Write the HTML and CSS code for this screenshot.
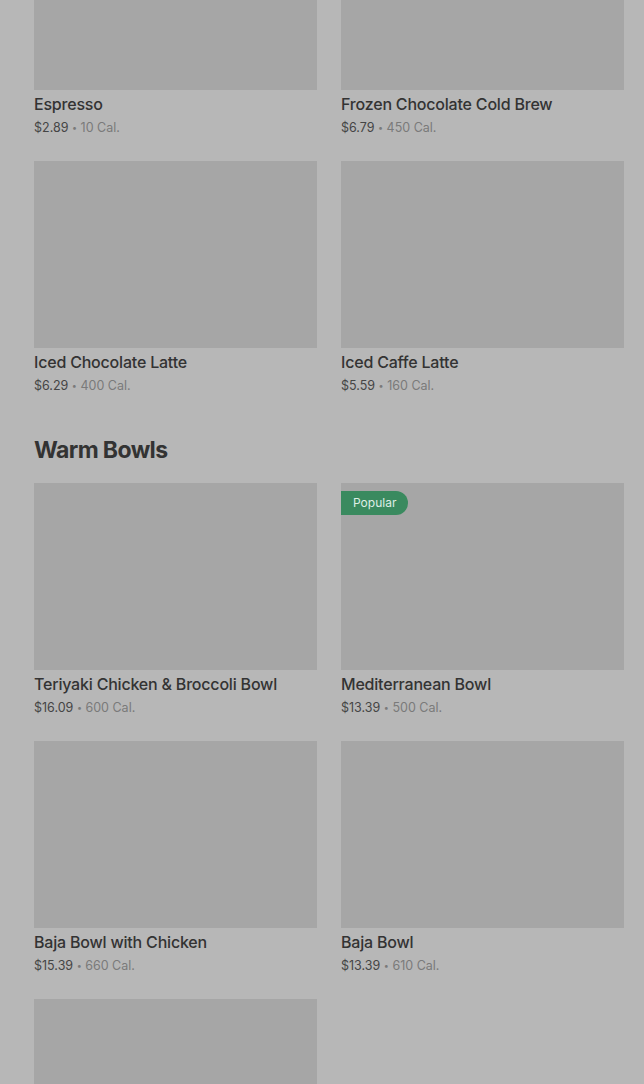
FILE: index.html
```html
<!DOCTYPE html>
<html>
<head>
<meta charset="utf-8">
<link rel="stylesheet" href="styles.css">
</head>
<body>
<div class="page">
  <div class="grid first">
    <div class="card"><div class="img"></div><div class="title">Espresso</div><div class="meta"><span class="price">$2.89</span> <span class="dot">•</span> 10 Cal.</div></div>
    <div class="card"><div class="img"></div><div class="title">Frozen Chocolate Cold Brew</div><div class="meta"><span class="price">$6.79</span> <span class="dot">•</span> 450 Cal.</div></div>
    <div class="card"><div class="img"></div><div class="title">Iced Chocolate Latte</div><div class="meta"><span class="price">$6.29</span> <span class="dot">•</span> 400 Cal.</div></div>
    <div class="card"><div class="img"></div><div class="title">Iced Caffe Latte</div><div class="meta"><span class="price">$5.59</span> <span class="dot">•</span> 160 Cal.</div></div>
  </div>
  <h2 class="section">Warm Bowls</h2>
  <div class="grid">
    <div class="card"><div class="img"></div><div class="title">Teriyaki Chicken &amp; Broccoli Bowl</div><div class="meta"><span class="price">$16.09</span> <span class="dot">•</span> 600 Cal.</div></div>
    <div class="card"><div class="img"><span class="badge">Popular</span></div><div class="title">Mediterranean Bowl</div><div class="meta"><span class="price">$13.39</span> <span class="dot">•</span> 500 Cal.</div></div>
    <div class="card"><div class="img"></div><div class="title">Baja Bowl with Chicken</div><div class="meta"><span class="price">$15.39</span> <span class="dot">•</span> 660 Cal.</div></div>
    <div class="card"><div class="img"></div><div class="title">Baja Bowl</div><div class="meta"><span class="price">$13.39</span> <span class="dot">•</span> 610 Cal.</div></div>
    <div class="card"><div class="img"></div></div>
  </div>
</div>
</body>
</html>
```

FILE: styles.css
```css
html, body {
  margin: 0;
  padding: 0;
  background: #b7b7b7;
  overflow: hidden;
  height: 1084px;
}
body {
  font-family: Inter, "Liberation Sans", sans-serif;
  color: #323232;
}
.page {
  padding: 0 20px 0 34px;
}
.grid {
  display: grid;
  grid-template-columns: 283px 283px;
  column-gap: 24px;
  row-gap: 24px;
}
.grid.first {
  margin-top: -97px;
}
.card {
  display: flex;
  flex-direction: column;
}
.img {
  position: relative;
  height: 187px;
  background: #a6a6a6;
}
.title {
  margin-top: 4px;
  font-size: 16px;
  line-height: 20px;
  font-weight: 500;
  color: #333;
  letter-spacing: -0.2px;
}
.meta {
  margin-top: 4px;
  font-size: 12.5px;
  line-height: 19px;
  color: #7a7a7a;
  letter-spacing: 0;
}
.price {
  color: #454545;
}
.dot {
  font-size: 9px;
  vertical-align: 1px;
}
.section {
  margin: 41px 0 19px;
  font-size: 23px;
  line-height: 28px;
  font-weight: 700;
  color: #333;
  letter-spacing: -0.6px;
}
.badge {
  position: absolute;
  top: 8px;
  left: 0;
  height: 24px;
  line-height: 24px;
  padding: 0 12px;
  font-size: 12px;
  color: #dfeee5;
  background: #3a8a5f;
  border-radius: 0 12px 12px 0;
}
```
